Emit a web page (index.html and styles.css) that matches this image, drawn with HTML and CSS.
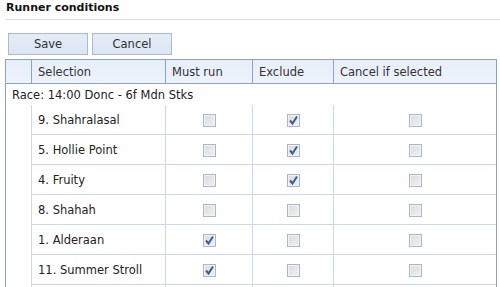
FILE: index.html
```html
<!DOCTYPE html>
<html lang="en">
<head>
<meta charset="utf-8">
<title>Runner conditions</title>
<link rel="stylesheet" href="styles.css">
</head>
<body>
<div class="title">Runner conditions</div>

<div class="toolbar">
    <button class="btn">Save</button>
    <button class="btn">Cancel</button>
</div>

<table class="grid">
    <colgroup>
        <col class="c-indent">
        <col class="c-sel">
        <col class="c-must">
        <col class="c-excl">
        <col class="c-cancel">
    </colgroup>
    <thead>
        <tr>
            <th class="indent"></th>
            <th>Selection</th>
            <th>Must run</th>
            <th>Exclude</th>
            <th>Cancel if selected</th>
        </tr>
    </thead>
    <tbody>
        <tr class="race"><td colspan="5">Race: 14:00 Donc - 6f Mdn Stks</td></tr>
        <tr>
            <td class="indent"></td>
            <td class="name">9. Shahralasal</td>
            <td><span class="chk"></span></td>
            <td><span class="chk on"><svg viewBox="0 0 11 11"><path d="M2 5.5 L4.5 8.5 L9 1.5"/></svg></span></td>
            <td><span class="chk"></span></td>
        </tr>
        <tr>
            <td class="indent"></td>
            <td class="name">5. Hollie Point</td>
            <td><span class="chk"></span></td>
            <td><span class="chk on"><svg viewBox="0 0 11 11"><path d="M2 5.5 L4.5 8.5 L9 1.5"/></svg></span></td>
            <td><span class="chk"></span></td>
        </tr>
        <tr>
            <td class="indent"></td>
            <td class="name">4. Fruity</td>
            <td><span class="chk"></span></td>
            <td><span class="chk on"><svg viewBox="0 0 11 11"><path d="M2 5.5 L4.5 8.5 L9 1.5"/></svg></span></td>
            <td><span class="chk"></span></td>
        </tr>
        <tr>
            <td class="indent"></td>
            <td class="name">8. Shahah</td>
            <td><span class="chk"></span></td>
            <td><span class="chk"></span></td>
            <td><span class="chk"></span></td>
        </tr>
        <tr>
            <td class="indent"></td>
            <td class="name">1. Alderaan</td>
            <td><span class="chk on"><svg viewBox="0 0 11 11"><path d="M2 5.5 L4.5 8.5 L9 1.5"/></svg></span></td>
            <td><span class="chk"></span></td>
            <td><span class="chk"></span></td>
        </tr>
        <tr>
            <td class="indent"></td>
            <td class="name">11. Summer Stroll</td>
            <td><span class="chk on"><svg viewBox="0 0 11 11"><path d="M2 5.5 L4.5 8.5 L9 1.5"/></svg></span></td>
            <td><span class="chk"></span></td>
            <td><span class="chk"></span></td>
        </tr>
        <tr>
            <td class="indent"></td>
            <td class="name"></td>
            <td></td>
            <td></td>
            <td></td>
        </tr>
    </tbody>
</table>
</body>
</html>
```

FILE: styles.css
```css
body{margin: 0;padding: 0;background: #FFF;color: #222;font-family: "DejaVu Sans", Tahoma, sans-serif;font-size: 11.5px;}

.title{margin-left: 5px;padding: 1px 0 0 1px;height: 18px;border-bottom: 1px solid #DDD;font-weight: bold;font-size: 11px;color: #111;}

.toolbar{display: flex;gap: 4px;margin: 13px 0 0 8px;}
.btn{width: 80px;height: 22px;padding: 0;border: 1px solid #A9BBD4;background: linear-gradient(#E4ECF7, #DCE6F3);color: #333;font-family: inherit;font-size: 11.5px;}

.grid{margin: 4px 0 0 5px;width: 492px;table-layout: fixed;border-collapse: separate;border-spacing: 0;border: 1px solid #8EA2C2;}
.grid .c-indent{width: 25px;}
.grid .c-sel{width: 134px;}
.grid .c-must{width: 87px;}
.grid .c-excl{width: 81px;}
.grid .c-cancel{width: 163px;}

.grid th{height: 23px;padding: 0 0 0 6px;text-align: left;font-weight: normal;font-size: 11.5px;color: #333;background: linear-gradient(#E6EEF9, #EDF3FB);border-left: 1px solid #8EA2C2;border-bottom: 1px solid #8EA2C2;}
.grid th.indent{border-left: none;}

.grid td{height: 29px;padding: 0;text-align: center;border-left: 1px solid #C9D8EC;border-bottom: 1px solid #C9D8EC;}
.grid td.indent{border: none;}
.grid td.name{text-align: left;padding-left: 6px;}
.grid .race td{height: 21px;padding: 0 0 0 6px;border: none;text-align: left;}

.chk{display: inline-block;vertical-align: middle;width: 11px;height: 11px;border: 1px solid #A7B7D0;background: linear-gradient(135deg, #DCDCDC, #F0F0F0);box-shadow: inset 0 0 0 1px #F2F2F2;}
.chk svg{display: block;width: 11px;height: 11px;}
.chk svg path{fill: none;stroke: #3E5F91;stroke-width: 2;}
```
